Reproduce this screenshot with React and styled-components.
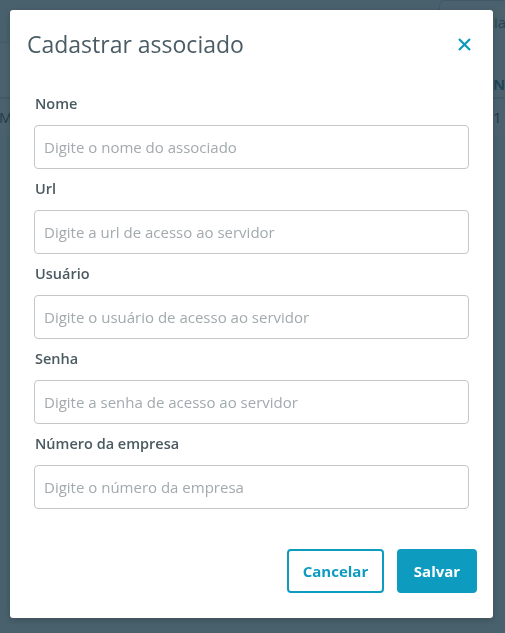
import React from "react";
import styled, { createGlobalStyle } from "styled-components";

const GlobalStyle = createGlobalStyle`
  html, body { margin: 0; padding: 0; }
  body {
    font-family: "Open Sans", "Lato", sans-serif;
    background: #ffffff;
  }
  * { box-sizing: border-box; }
`;

const Page = styled.div`
  width: 505px;
  height: 633px;
  overflow: hidden;
  background: #f4f6f7;
`;

const TopBar = styled.div`
  height: 43px;
  display: flex;
  padding-left: 439px;
  border-bottom: 1px solid #d6dcdf;
`;

const TabButton = styled.div`
  flex: none;
  width: 140px;
  height: 43px;
  border: 1px solid #c5d0d6;
  border-bottom: none;
  border-radius: 6px 0 0 0;
  background: #ffffff;
  font-size: 15px;
  color: #5a6c75;
  display: flex;
  align-items: center;
  padding-left: 14px;
`;

const TableHead = styled.div`
  display: grid;
  grid-template-columns: 493px 1fr;
  height: 56px;
  align-items: end;
  padding-bottom: 3px;
  border-bottom: 2px solid #d6dcdf;
  background: #ffffff;
`;

const HeadCell = styled.div`
  font-size: 15px;
  font-weight: 700;
  color: #1e6f8c;
  white-space: nowrap;
`;

const TableRow = styled.div`
  display: grid;
  grid-template-columns: 493px 1fr;
  height: 36px;
  align-items: center;
  background: #ffffff;
`;

const Cell = styled.div`
  font-size: 15px;
  color: #33444c;
  white-space: nowrap;
  margin-left: ${(p) => p.$shift || 0}px;
`;

const Overlay = styled.div`
  position: fixed;
  inset: 0;
  background: rgba(30, 59, 74, 0.8);
  padding: 10px;
  display: flex;
  align-items: flex-start;
`;

const Modal = styled.div`
  width: 483px;
  background: #ffffff;
  border-radius: 3px;
  box-shadow: 0 2px 6px rgba(0, 0, 0, 0.2);
`;

const Header = styled.div`
  display: flex;
  align-items: center;
  justify-content: space-between;
  padding: 19px 22px 0 17px;
`;

const Title = styled.h2`
  margin: 0;
  font-size: 23px;
  line-height: 30px;
  font-weight: 400;
  color: #4b5c65;
`;

const CloseButton = styled.button`
  border: none;
  background: none;
  padding: 0;
  width: 14px;
  height: 14px;
  display: flex;
  align-items: center;
  justify-content: center;
  cursor: pointer;
  color: #0c9abe;
`;

const Body = styled.div`
  display: flex;
  flex-direction: column;
  gap: 10px;
  padding: 35px 24px 0 24px;
`;

const Field = styled.div`
  display: flex;
  flex-direction: column;
  gap: 11px;
`;

const Label = styled.label`
  padding-left: 1px;
  font-size: 14.5px;
  line-height: 20px;
  font-weight: 600;
  color: #4a5a61;
`;

const Input = styled.input`
  width: 100%;
  height: 44px;
  border: 1px solid #c3c7c8;
  border-radius: 4px;
  padding: 0 9px;
  font-family: inherit;
  font-size: 15px;
  color: #333;
  outline: none;
  &::placeholder {
    color: #a2aaae;
  }
`;

const Footer = styled.div`
  display: flex;
  justify-content: flex-end;
  gap: 13px;
  padding: 40px 16px 25px 24px;
`;

const Button = styled.button`
  height: 44px;
  min-width: ${(p) => p.$w}px;
  border-radius: 4px;
  border: 2px solid #0e9bc0;
  background: ${(p) => (p.$primary ? "#0e9bc0" : "#ffffff")};
  color: ${(p) => (p.$primary ? "#ffffff" : "#0e9bc0")};
  font-family: inherit;
  font-size: 15px;
  font-weight: 700;
  padding: 0 12px;
  cursor: pointer;
`;

const fields = [
  { label: "Nome", placeholder: "Digite o nome do associado" },
  { label: "Url", placeholder: "Digite a url de acesso ao servidor" },
  { label: "Usuário", placeholder: "Digite o usuário de acesso ao servidor" },
  { label: "Senha", placeholder: "Digite a senha de acesso ao servidor" },
  { label: "Número da empresa", placeholder: "Digite o número da empresa" },
];

export default function App() {
  return (
    <>
      <GlobalStyle />
      <Page>
        <TopBar>
          <TabButton>Associados</TabButton>
        </TopBar>
        <TableHead>
          <HeadCell />
          <HeadCell>Número</HeadCell>
        </TableHead>
        <TableRow>
          <Cell $shift={-1}>M</Cell>
          <Cell>1</Cell>
        </TableRow>
      </Page>
      <Overlay>
        <Modal>
          <Header>
            <Title>Cadastrar associado</Title>
            <CloseButton aria-label="Fechar">
              <svg width="13" height="13" viewBox="0 0 13 13">
                <path
                  d="M1 1 L12 12 M12 1 L1 12"
                  stroke="currentColor"
                  strokeWidth="2.2"
                  strokeLinecap="butt"
                />
              </svg>
            </CloseButton>
          </Header>
          <Body>
            {fields.map((f) => (
              <Field key={f.label}>
                <Label>{f.label}</Label>
                <Input placeholder={f.placeholder} />
              </Field>
            ))}
          </Body>
          <Footer>
            <Button $w={97}>Cancelar</Button>
            <Button $primary $w={80}>Salvar</Button>
          </Footer>
        </Modal>
      </Overlay>
    </>
  );
}
